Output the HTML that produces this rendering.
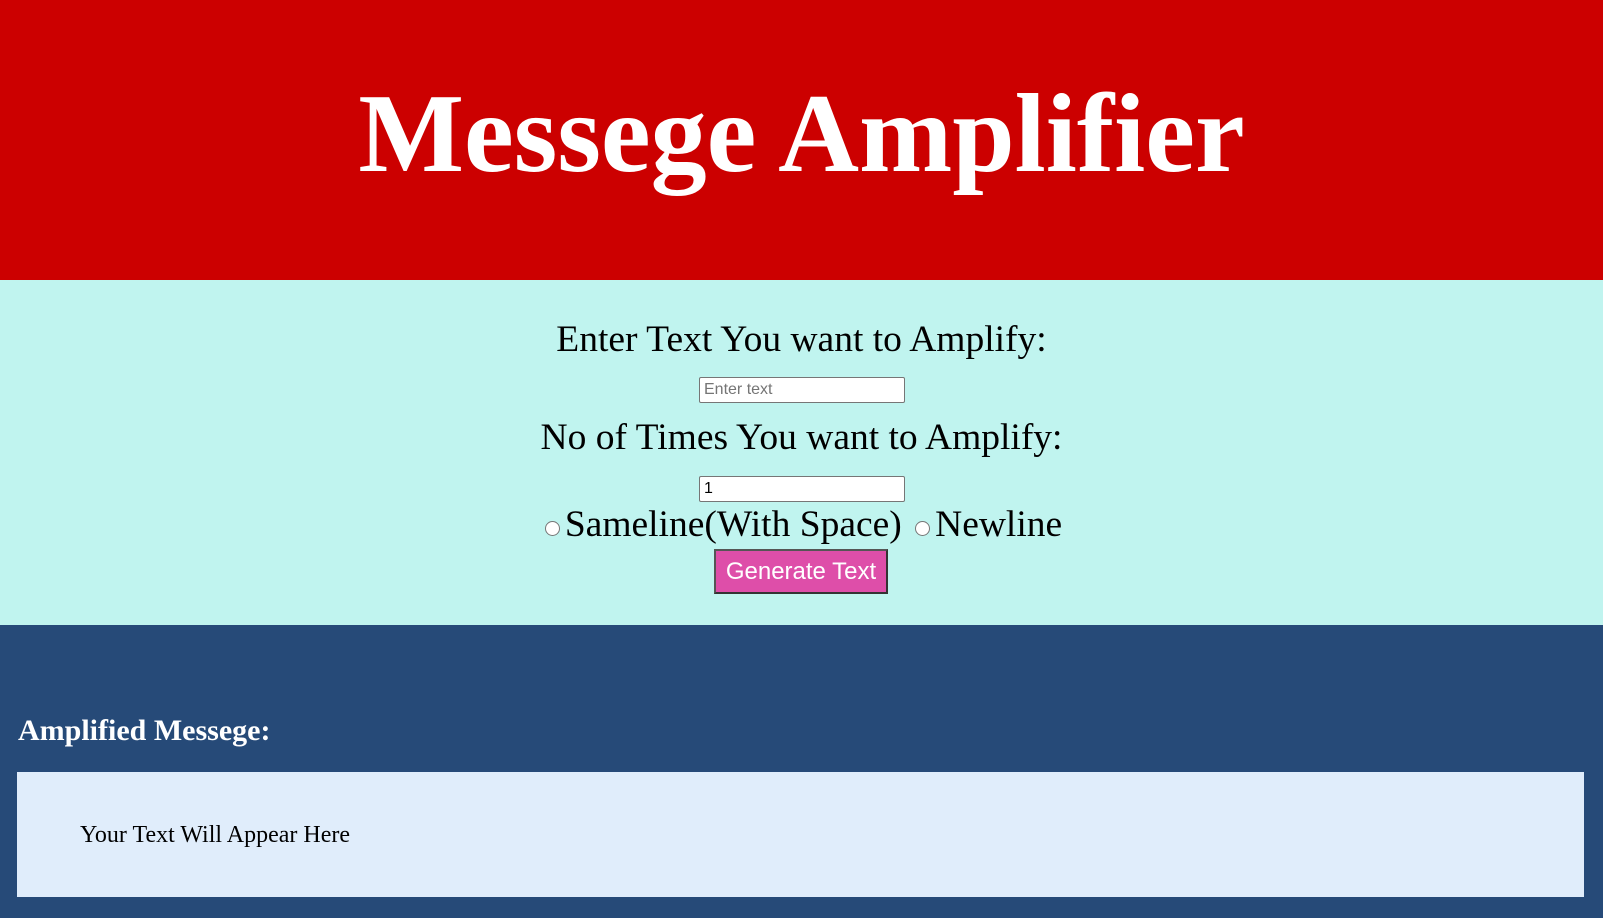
<!DOCTYPE html>
<html><head><meta charset="utf-8"><style>
html,body{margin:0;padding:0;width:1606px;height:922px;overflow:hidden;background:#fff;font-family:"Liberation Serif",serif;}
.hdr{position:absolute;left:0;top:0;width:1603px;height:280px;background:#cc0000;}
.hdr h1{position:absolute;left:0;width:1603px;top:78px;margin:0;text-align:center;color:#fff;font-size:112px;line-height:112px;font-weight:bold;}
.mid{position:absolute;left:0;top:280px;width:1603px;height:345px;background:#c0f4ef;}
.lbl{position:absolute;left:0;width:1603px;text-align:center;font-size:37.5px;line-height:40px;color:#000;}
.inp{position:absolute;left:699px;border:1px solid #767676;background:#fff;font-family:"Liberation Sans",sans-serif;font-size:16px;line-height:24px;padding:0 4px;box-sizing:border-box;width:206px;height:26px;border-radius:2px;}
.radio{display:inline-block;width:15px;height:15px;border:1px solid #767676;border-radius:50%;background:#fff;vertical-align:0px;margin:0 5px 0 4px;box-sizing:border-box;}
.btn{position:absolute;left:714px;top:549px;width:174px;height:45px;background:#de4ea9;border:2px solid #333;border-left-color:#555;border-top-color:#555;box-sizing:border-box;color:#fff;font-family:"Liberation Sans",sans-serif;font-size:24px;line-height:41px;text-align:center;}
.bot{position:absolute;left:0;top:625px;width:1603px;height:293px;background:#264a78;}
.bot h3{position:absolute;left:18px;top:90px;margin:0;color:#fff;font-size:30px;line-height:32px;font-weight:bold;}
.box{position:absolute;left:17px;top:147px;width:1567px;height:125px;background:#e0edfb;}
.box p{position:absolute;left:63px;top:50px;margin:0;font-size:24px;line-height:26px;color:#000;}
</style></head><body>
<div class="hdr"><h1>Messege Amplifier</h1></div>
<div class="mid"></div>
<div class="lbl" style="top:320px">Enter Text You want to Amplify:</div>
<div class="inp" style="top:377px;color:#757575">Enter text</div>
<div class="lbl" style="top:418px">No of Times You want to Amplify:</div>
<div class="inp" style="top:476px;color:#000">1</div>
<div class="lbl" style="top:505px"><span class="radio"></span>Sameline(With Space) <span class="radio"></span>Newline</div>
<div class="btn">Generate Text</div>
<div class="bot"><h3>Amplified Messege:</h3><div class="box"><p>Your Text Will Appear Here</p></div></div>
</body></html>
